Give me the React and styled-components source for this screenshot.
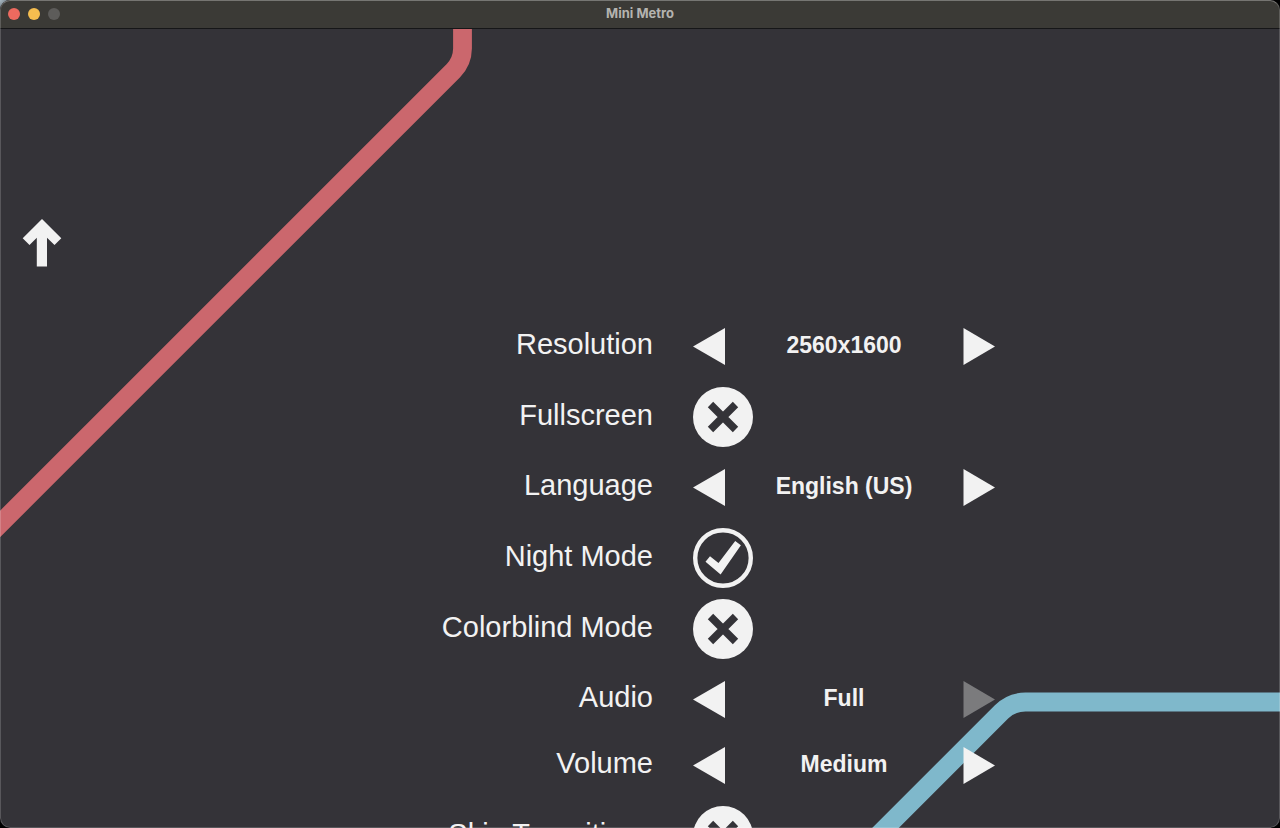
import React, { useState } from "react";
import styled, { createGlobalStyle } from "styled-components";

const night = "#343338";
const chalk = "#f2f2f2";

const GlobalStyle = createGlobalStyle`
  * { box-sizing: border-box; }
  body {
    margin: 0;
    background: radial-gradient(circle at 0 0, #a9bac4 0, #000 24px);
    font-family: "Liberation Sans", Arial, sans-serif;
    color: ${chalk};
  }
`;

const AppWindow = styled.div`
  position: relative;
  display: flex;
  flex-direction: column;
  height: 100vh;
  overflow: hidden;
  border-radius: 10px;
  background: ${night};

  &::after {
    content: "";
    position: absolute;
    inset: 0;
    border: 1px solid rgba(255, 255, 255, 0.18);
    border-top-color: rgba(255, 255, 255, 0.3);
    border-radius: 10px;
    pointer-events: none;
  }
`;

const TitleBar = styled.header`
  display: grid;
  grid-template-columns: 1fr auto 1fr;
  align-items: center;
  flex: none;
  height: 29px;
  padding: 0 8px;
  background: #3b3a36;
  border-bottom: 1px solid #161618;
`;

const WindowButtons = styled.div`
  display: flex;
  gap: 8px;
`;

const WindowButton = styled.button`
  width: 12px;
  height: 12px;
  padding: 0;
  border: 0;
  border-radius: 50%;
  background: ${(p) => p.$color};
`;

const WindowTitle = styled.h1`
  margin: 0;
  padding-bottom: 2px;
  font: 700 13px/16px Inter, sans-serif;
  color: #b4b3af;
`;

const Stage = styled.main`
  position: relative;
  display: flex;
  flex: 1;
  min-height: 0;
  overflow: hidden;
`;

const MetroLines = styled.svg`
  position: absolute;
  inset: 0;
  width: 100%;
  height: 100%;
`;

const Rail = styled.nav`
  position: relative;
  flex: none;
  width: 67px;
  padding: 190px 0 0 22px;
`;

const BackButton = styled.button`
  display: block;
  padding: 0;
  border: 0;
  background: none;
  cursor: pointer;

  svg { display: block; }
`;

const Settings = styled.form`
  position: relative;
  display: flex;
  flex-direction: column;
  flex: 1;
  gap: 11px;
  padding-top: 288px;
`;

const SoundSettings = styled.div`
  display: flex;
  flex-direction: column;
  gap: 7px;
`;

const Row = styled.div`
  display: grid;
  grid-template-columns: 1fr 1fr;
  column-gap: 39px;
  align-items: center;
  flex: none;
  height: ${(p) => (p.$toggle ? 60 : 59)}px;
`;

const RowLabel = styled.label`
  padding: 0 1px 5px 0;
  text-align: right;
  font-size: 29px;
  line-height: 36px;
  white-space: nowrap;
`;

const StepperBox = styled.div`
  display: flex;
  align-items: center;
  width: 302px;
`;

const StepButton = styled.button`
  flex: none;
  width: 32px;
  height: 37px;
  padding: 0;
  border: 0;
  background: none;
  color: ${chalk};
  cursor: pointer;

  &:disabled { color: #7b7b7d; cursor: default; }
  svg { display: block; }
`;

const StepValue = styled.output`
  flex: 1;
  padding-bottom: 3px;
  text-align: center;
  font-size: 23px;
  font-weight: 700;
  line-height: 28px;
  white-space: nowrap;
`;

const ToggleBox = styled.span`
  position: relative;
  display: block;
  width: 60px;
  height: 60px;

  svg { display: block; }
`;

const ToggleInput = styled.input`
  position: absolute;
  inset: 0;
  width: 100%;
  height: 100%;
  margin: 0;
  opacity: 0;
  cursor: pointer;
`;

function Stepper({ id, label, options, initial }) {
  const [index, setIndex] = useState(initial);
  const loops = id !== "audio";
  const step = (by) => setIndex((index + by + options.length) % options.length);
  return (
    <Row>
      <RowLabel htmlFor={id}>{label}</RowLabel>
      <StepperBox>
        <StepButton
          type="button"
          aria-label={`Previous ${label}`}
          disabled={!loops && index === 0}
          onClick={() => step(-1)}
        >
          <svg width="32" height="37" viewBox="0 0 32 37" aria-hidden="true">
            <path d="M0 18.5 32 0V37Z" fill="currentColor" />
          </svg>
        </StepButton>
        <StepValue id={id}>{options[index]}</StepValue>
        <StepButton
          type="button"
          aria-label={`Next ${label}`}
          disabled={!loops && index === options.length - 1}
          onClick={() => step(1)}
        >
          <svg width="32" height="37" viewBox="0 0 32 37" aria-hidden="true">
            <path d="M32 18.5 .5 0V37Z" fill="currentColor" />
          </svg>
        </StepButton>
      </StepperBox>
    </Row>
  );
}

function Toggle({ id, label, initial = false }) {
  const [on, setOn] = useState(initial);
  return (
    <Row $toggle>
      <RowLabel htmlFor={id}>{label}</RowLabel>
      <ToggleBox>
        <svg width="60" height="60" viewBox="0 0 60 60" aria-hidden="true">
          {on ? (
            <>
              <circle cx="30" cy="30" r="27.8" fill={night} stroke={chalk} strokeWidth="4.4" />
              <path
                d="M12.5 33.7 17 28.2 25.5 34.9 42.2 13 47.9 17.2 27.6 46.5Z"
                fill={chalk}
              />
            </>
          ) : (
            <>
              <circle cx="30" cy="30" r="30" fill={chalk} />
              <path d="M17.5 17.5 42.5 42.5M42.5 17.5 17.5 42.5" stroke={night} strokeWidth="7.6" />
            </>
          )}
        </svg>
        <ToggleInput
          id={id}
          type="checkbox"
          checked={on}
          onChange={(e) => setOn(e.target.checked)}
        />
      </ToggleBox>
    </Row>
  );
}

export default function App() {
  return (
    <>
      <GlobalStyle />
      <AppWindow>
        <TitleBar>
          <WindowButtons>
            <WindowButton type="button" aria-label="Close" $color="#ed6a5f" />
            <WindowButton type="button" aria-label="Minimize" $color="#f5bd4f" />
            <WindowButton type="button" aria-label="Zoom" $color="#5d5c5a" />
          </WindowButtons>
          <WindowTitle>Mini Metro</WindowTitle>
        </TitleBar>
        <Stage>
          <MetroLines
            viewBox="0 0 1280 799"
            preserveAspectRatio="xMidYMid slice"
            fill="none"
            strokeWidth="18.8"
            aria-hidden="true"
          >
            <path d="M462.5-20V19.5A32 32 0 0 1 453.2 41.8L-30 525" stroke="#cb676d" />
            <path d="M1310 673H1025.5A34 34 0 0 0 1001.5 682.9L845 839.4" stroke="#7fb8cb" />
          </MetroLines>
          <Rail>
            <BackButton type="button" aria-label="Back">
              <svg width="40" height="48" viewBox="0 0 40 48" aria-hidden="true">
                <path
                  d="M20 0 39.3 19.3 32.5 26 25 18.8V47.5H14.8V18.8L7.5 26 .7 19.3Z"
                  fill={chalk}
                />
              </svg>
            </BackButton>
          </Rail>
          <Settings>
            <Stepper
              id="resolution"
              label="Resolution"
              options={["1280x800", "1920x1200", "2560x1600"]}
              initial={2}
            />
            <Toggle id="fullscreen" label="Fullscreen" />
            <Stepper
              id="language"
              label="Language"
              options={["English (UK)", "English (US)"]}
              initial={1}
            />
            <Toggle id="night-mode" label="Night Mode" initial />
            <Toggle id="colorblind-mode" label="Colorblind Mode" />
            <SoundSettings>
              <Stepper id="audio" label="Audio" options={["Off", "Reduced", "Full"]} initial={2} />
              <Stepper id="volume" label="Volume" options={["Low", "Medium", "High"]} initial={1} />
            </SoundSettings>
            <Toggle id="skip-transitions" label="Skip Transitions" />
          </Settings>
        </Stage>
      </AppWindow>
    </>
  );
}
